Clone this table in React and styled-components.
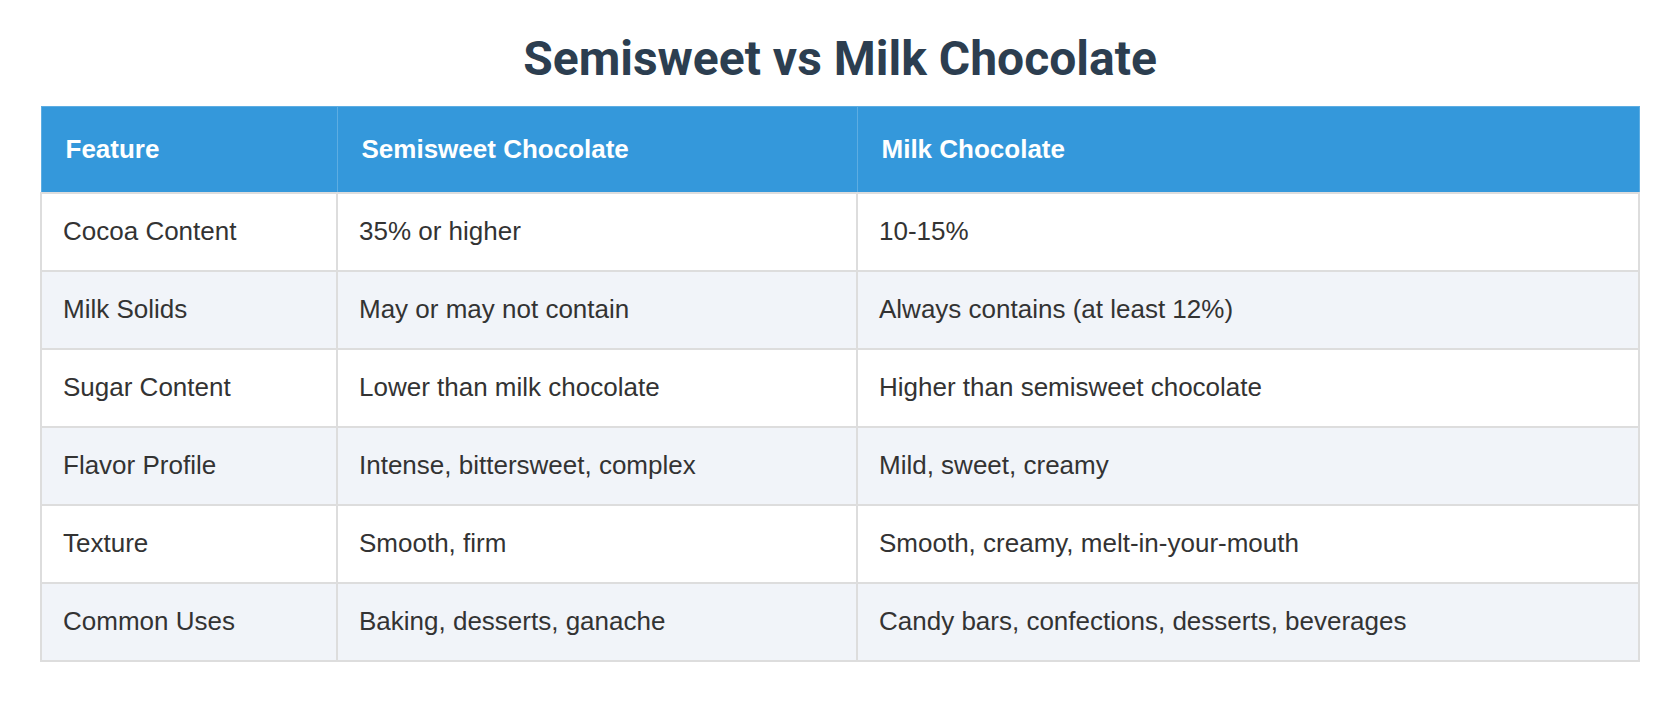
import React from "react";
import styled, { createGlobalStyle } from "styled-components";

const GlobalStyle = createGlobalStyle`
  body {
    margin: 0;
    background: #ffffff;
    font-family: "Liberation Sans", Arial, sans-serif;
  }
`;

const Page = styled.div`
  padding: 0 40px 40px;
`;

const Title = styled.h1`
  margin: 0;
  padding: 30px 0 18px;
  text-align: center;
  font-family: Roboto, "Liberation Sans", sans-serif;
  font-weight: 700;
  font-size: 48px;
  line-height: 58px;
  color: #2c3e50;
`;

const Table = styled.table`
  width: 100%;
  border-collapse: collapse;
  table-layout: fixed;
  font-size: 26px;
  line-height: 30px;
`;

const HeadCell = styled.th`
  box-sizing: border-box;
  width: ${({ w }) => w || "auto"};
  background: #3498db;
  color: #ffffff;
  font-weight: 700;
  text-align: left;
  padding: 27px 24px 28px;
  border: 1px solid #5dade2;
`;

const Row = styled.tr`
  background: ${({ striped }) => (striped ? "#f1f4f9" : "#ffffff")};
`;

const Cell = styled.td`
  padding: 22px 21px 24px;
  color: #333333;
  border: 2px solid #dddddd;
`;

const rows = [
  ["Cocoa Content", "35% or higher", "10-15%"],
  ["Milk Solids", "May or may not contain", "Always contains (at least 12%)"],
  ["Sugar Content", "Lower than milk chocolate", "Higher than semisweet chocolate"],
  ["Flavor Profile", "Intense, bittersweet, complex", "Mild, sweet, creamy"],
  ["Texture", "Smooth, firm", "Smooth, creamy, melt-in-your-mouth"],
  ["Common Uses", "Baking, desserts, ganache", "Candy bars, confections, desserts, beverages"],
];

export default function App() {
  return (
    <>
      <GlobalStyle />
      <Page>
        <Title>Semisweet vs Milk Chocolate</Title>
        <Table>
          <thead>
            <tr>
              <HeadCell w="296px">Feature</HeadCell>
              <HeadCell w="520px">Semisweet Chocolate</HeadCell>
              <HeadCell>Milk Chocolate</HeadCell>
            </tr>
          </thead>
          <tbody>
            {rows.map((r, i) => (
              <Row key={r[0]} striped={i % 2 === 1}>
                {r.map((c) => (
                  <Cell key={c}>{c}</Cell>
                ))}
              </Row>
            ))}
          </tbody>
        </Table>
      </Page>
    </>
  );
}
